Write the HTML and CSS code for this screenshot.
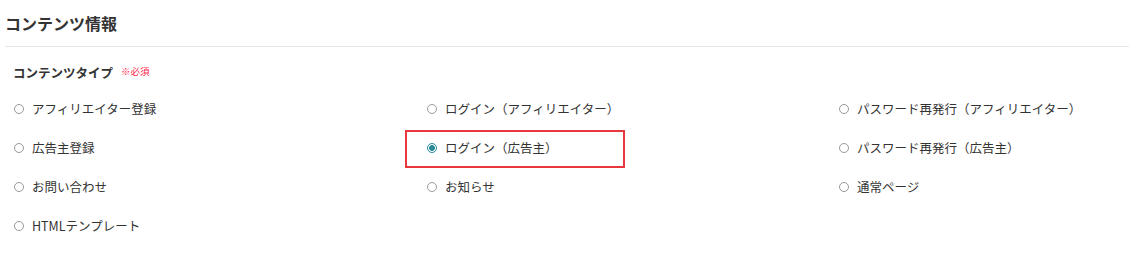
FILE: index.html
```html
<!DOCTYPE html>
<html lang="ja">
<head>
<meta charset="utf-8">
<link rel="stylesheet" href="styles.css">
</head>
<body>
<div class="page">
  <div class="header"><h2 class="title">コンテンツ情報</h2></div>
  <div class="section">
    <div class="label">コンテンツタイプ<span class="req">※必須</span></div>
    <div class="grid">
      <label class="item"><span class="radio"></span><span class="txt">アフィリエイター登録</span></label>
      <label class="item"><span class="radio"></span><span class="txt">ログイン（アフィリエイター）</span></label>
      <label class="item"><span class="radio"></span><span class="txt">パスワード再発行（アフィリエイター）</span></label>
      <label class="item"><span class="radio"></span><span class="txt">広告主登録</span></label>
      <label class="item"><span class="radio on"></span><span class="txt">ログイン（広告主）</span><span class="mark"></span></label>
      <label class="item"><span class="radio"></span><span class="txt">パスワード再発行（広告主）</span></label>
      <label class="item"><span class="radio"></span><span class="txt">お問い合わせ</span></label>
      <label class="item"><span class="radio"></span><span class="txt">お知らせ</span></label>
      <label class="item"><span class="radio"></span><span class="txt">通常ページ</span></label>
      <label class="item"><span class="radio"></span><span class="txt">HTMLテンプレート</span></label>
    </div>
  </div>
</div>
</body>
</html>
```
FILE: styles.css
```css
html, body { margin: 0; padding: 0; background: #fff; }
body {
  font-family: "Noto Sans CJK JP", "Noto Sans", sans-serif;
  color: #333;
  width: 1129px;
  height: 255px;
  overflow: hidden;
}
.page { padding-left: 5px; }
.header {
  height: 46px;
  display: flex;
  align-items: center;
  border-bottom: 1px solid #e8e8e8;
}
.title {
  margin: 0;
  font-size: 16px;
  font-weight: bold;
  line-height: 20px;
  color: #333;
}
.section { padding-left: 8px; }
.label {
  margin-top: 16px;
  font-size: 12.5px;
  font-weight: bold;
  line-height: 20px;
  display: flex;
  align-items: center;
}
.req {
  color: #ff1f4b;
  font-size: 9.5px;
  font-weight: normal;
  margin-left: 8px;
  position: relative;
  top: -2px;
}
.grid {
  margin-top: 6px;
  display: grid;
  grid-template-columns: 413px 412px 1fr;
  grid-auto-rows: 39px;
}
.item {
  position: relative;
  display: flex;
  align-items: center;
  gap: 8px;
  font-size: 12.5px;
  white-space: nowrap;
}
.radio {
  box-sizing: border-box;
  width: 10px;
  height: 10px;
  border: 1px solid #999;
  border-radius: 50%;
  flex: none;
  margin-left: 1px;
}
.radio.on {
  border-color: #2a8a9a;
  background: radial-gradient(circle, #2a8a9a 0 2.6px, #fff 3.2px);
  border-width: 1.2px;
}
.mark {
  position: absolute;
  left: -21px;
  top: 1.5px;
  width: 220px;
  height: 38px;
  box-sizing: border-box;
  border: 2px solid #e8383d;
}
```
